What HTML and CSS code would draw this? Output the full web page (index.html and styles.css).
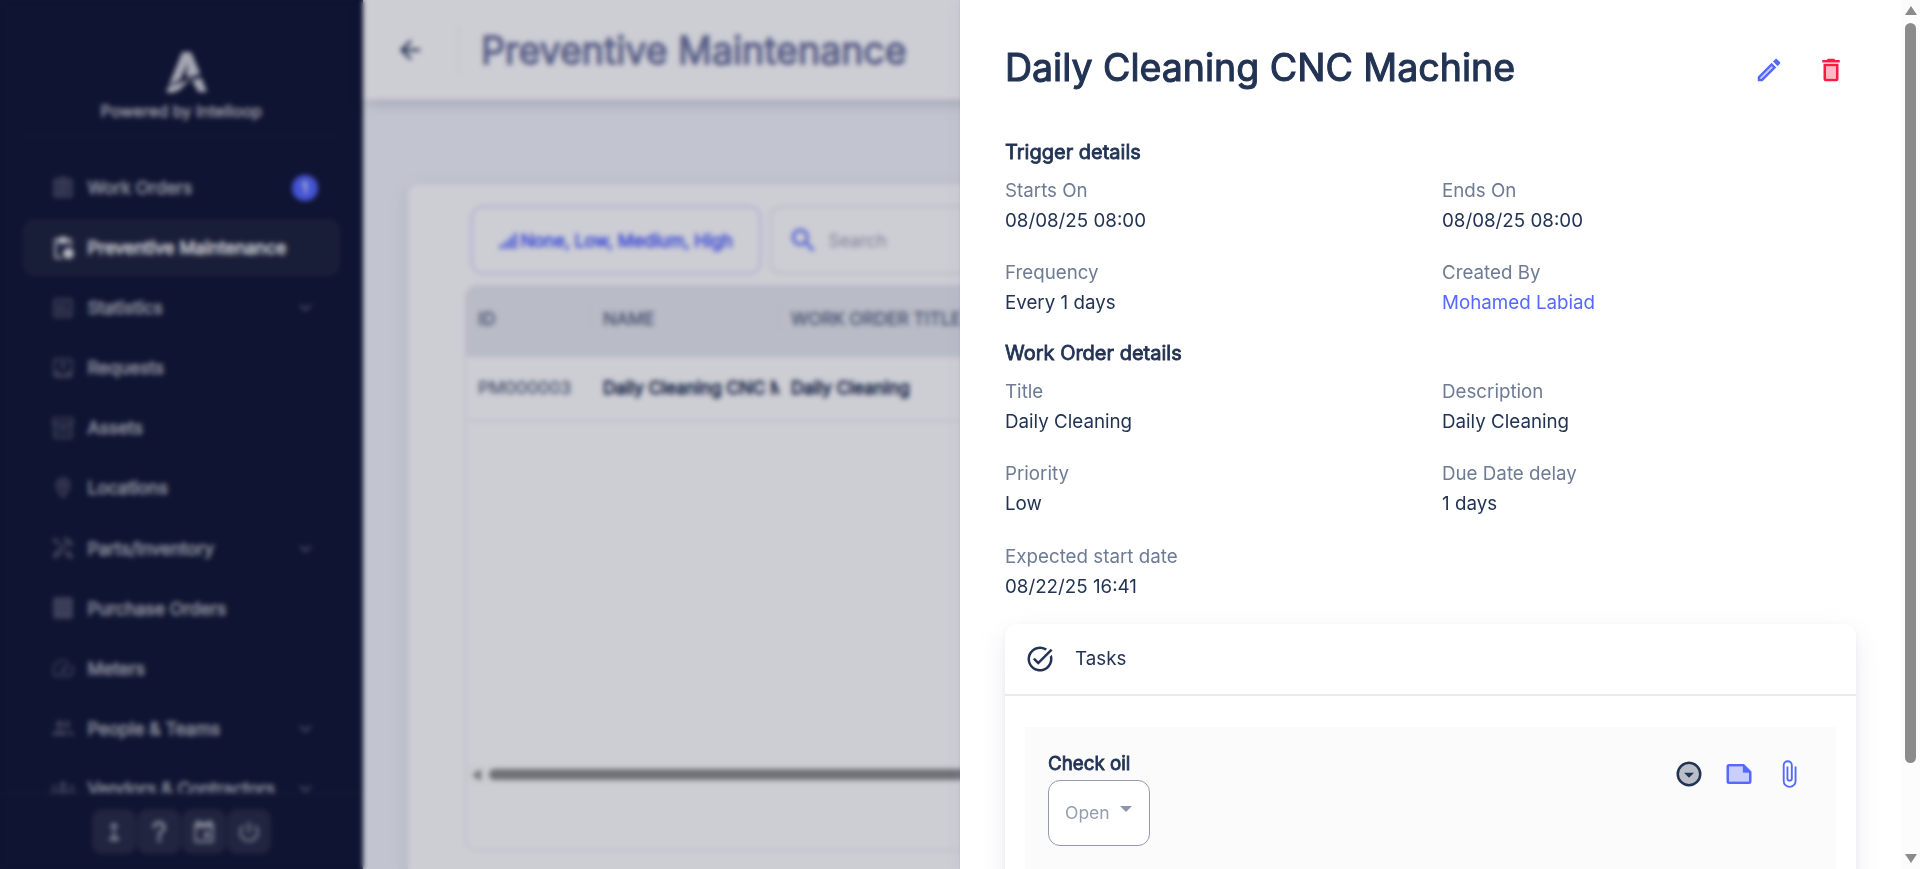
FILE: index.html
```html
<!DOCTYPE html>
<html lang="en">
<head>
<meta charset="utf-8">
<title>Preventive Maintenance</title>
<link rel="stylesheet" href="styles.css">
</head>
<body>
<div class="app">
  <aside class="sidebar">
    <div class="brand">
      <svg class="logo" viewBox="0 0 44 46"><path d="M17 2h9l4 10-4 14-5 1 2-14-8 18-12 6z"/><path d="M27 4l9 21-14 4z"/><path d="M0 44l3-6 16-5 17-7-12 6-10 10-8 3z"/><path d="M27 32l10-3 6 15h-9z"/></svg>
      <div class="powered">Powered by Intelloop</div>
    </div>
    <nav class="menu">
      <a class="item"><svg class="ico" viewBox="0 0 24 24"><path opacity=".6" d="M5 5h14v14H5z"/><path d="M19 3h-4.200a3 3 0 0 0-5.600 0H5a2 2 0 0 0-2 2v14a2 2 0 0 0 2 2h14a2 2 0 0 0 2-2V5a2 2 0 0 0-2-2zm0 16H5V5h14zM7 7h10v2H7zm0 4h10v2H7zm0 4h7v2H7z"/></svg><span>Work Orders</span><b class="badge">1</b></a>
      <a class="item active"><svg class="ico" viewBox="0 0 24 24"><path d="M17 12a5 5 0 1 0 0 10 5 5 0 0 0 0-10zM18 3h-3.200a3 3 0 0 0-5.600 0H6a2 2 0 0 0-2 2v15a2 2 0 0 0 2 2h6a7 7 0 0 1-1.400-2H6V5h2v3h8V5h2v5a7 7 0 0 1 2 .700V5a2 2 0 0 0-2-2z"/></svg><span>Preventive Maintenance</span></a>
      <a class="item"><svg class="ico" viewBox="0 0 24 24"><path opacity=".3" d="M5 5h14v14H5z"/><path d="M19 3H5a2 2 0 0 0-2 2v14a2 2 0 0 0 2 2h14a2 2 0 0 0 2-2V5a2 2 0 0 0-2-2zm0 16H5V5h14zM7 10h2v7H7zm4-3h2v10h-2zm4 6h2v4h-2z"/></svg><span>Statistics</span><svg class="chev" viewBox="0 0 24 24"><path d="M7.400 8.600 12 13.200l4.600-4.600L18 10l-6 6-6-6z"/></svg></a>
      <a class="item"><svg class="ico" viewBox="0 0 24 24"><path d="M19 3H5a2 2 0 0 0-2 2v14a2 2 0 0 0 2 2h14a2 2 0 0 0 2-2V5a2 2 0 0 0-2-2zm0 12h-4a3 3 0 0 1-6 0H5V5h14zM8 10h3v4h2v-4h3l-4-4z"/></svg><span>Requests</span></a>
      <a class="item"><svg class="ico" viewBox="0 0 24 24"><path opacity=".3" d="M5 8h14v12H5z"/><path d="M20 2H4a2 2 0 0 0-2 2v3.500c0 .700.400 1.300 1 1.500V20a2 2 0 0 0 2 2h14a2 2 0 0 0 2-2V9c.600-.200 1-.800 1-1.500V4a2 2 0 0 0-2-2zm-1 18H5V9h14zM4 7V4h16v3zm5 5h6v2H9z"/></svg><span>Assets</span></a>
      <a class="item"><svg class="ico" viewBox="0 0 24 24"><path opacity=".4" d="M12 4a5 5 0 0 0-5 5c0 3 3 7 5 10 2-3 5-7 5-10a5 5 0 0 0-5-5z"/><path d="M12 2a7 7 0 0 0-7 7c0 5.200 7 13 7 13s7-7.800 7-13a7 7 0 0 0-7-7zM7 9a5 5 0 0 1 10 0c0 2.900-2.900 7.200-5 9.900C9.900 16.200 7 11.900 7 9zm5-2.500a2.500 2.500 0 1 0 0 5 2.500 2.500 0 0 0 0-5z"/></svg><span>Locations</span></a>
      <a class="item"><svg class="ico" viewBox="0 0 24 24"><path d="m21.700 18.900-5-5.100h-1l-2.500 2.500v1l5.100 5c.300.300.700.300 1 0l2.400-2.400a.7.700 0 0 0 0-1zM17.300 10.200l1.400-1.400 2.200 2.100a3 3 0 0 0 0-4.200l-3.600-3.500-1.400 1.400V1.800L15.200 1l-3.500 3.600.7.700h2.800l-1.400 1.400 1.100 1.100-2.900 2.900-4.100-4.200V5.100L4.800 2.100 2 4.900l3 3h1.500l4.100 4.200-.9.800H7.600l-5.300 5.300a1 1 0 0 0 0 1.400l2.100 2.100c.400.400 1 .400 1.400 0l5.300-5.300v-2.100l5.200-5.200z"/></svg><span>Parts/Inventory</span><svg class="chev" viewBox="0 0 24 24"><path d="M7.400 8.600 12 13.200l4.600-4.600L18 10l-6 6-6-6z"/></svg></a>
      <a class="item"><svg class="ico" viewBox="0 0 24 24"><path opacity=".6" d="M3 3h18v18H3z"/><path d="M3 2h18v20H3zm3 5h12v1H6zm0 4h12v1H6zm0 4h12v1H6z" fill-rule="evenodd"/></svg><span>Purchase Orders</span></a>
      <a class="item"><svg class="ico" viewBox="0 0 24 24"><path d="m20.400 8.600-1.200 1.800A8 8 0 0 1 19 18H5.100A8 8 0 0 1 15.600 6.800L17.400 5.600A10 10 0 0 0 3.400 19a2 2 0 0 0 1.700 1h13.800a2 2 0 0 0 1.700-1 10 10 0 0 0-.2-10.400zM10.600 15.400a2 2 0 0 0 2.800 0l5.700-8.500-8.500 5.700a2 2 0 0 0 0 2.800z"/></svg><span>Meters</span></a>
      <a class="item"><svg class="ico" viewBox="0 0 24 24"><path d="M9 12a3.500 3.500 0 1 0 0-7 3.500 3.500 0 0 0 0 7zm0 1.800c-2.300 0-7 1.200-7 3.500V19h14v-1.700c0-2.300-4.700-3.500-7-3.500zM15 12a3.500 3.500 0 1 0-1.500-6.600 5.500 5.500 0 0 1 0 6.200c.400.200 1 .400 1.500.400zm1 1.800c1.200.8 2 2 2 3.500V19h4v-1.700c0-2-3.500-3.200-6-3.500z"/></svg><span>People &amp; Teams</span><svg class="chev" viewBox="0 0 24 24"><path d="M7.400 8.600 12 13.200l4.600-4.600L18 10l-6 6-6-6z"/></svg></a>
      <a class="item"><svg class="ico" viewBox="0 0 24 24"><circle cx="12" cy="9" r="3"/><circle cx="4" cy="11" r="2"/><circle cx="20" cy="11" r="2"/><path d="M6 18v-2c0-2 3-3 6-3s6 1 6 3v2zM0 18v-2c0-1 2-2 5-2v4zm24 0v-2c0-1-2-2-5-2v4z"/></svg><span>Vendors &amp; Contractors</span><svg class="chev" viewBox="0 0 24 24"><path d="M7.400 8.600 12 13.200l4.600-4.600L18 10l-6 6-6-6z"/></svg></a>
    </nav>
    <div class="dock">
      <span class="dock-btn"><svg viewBox="0 0 24 24"><path d="M12 3 7.500 7.500H11v9H8V20h8.500v-3.500H13v-9h3.500z"/></svg></span>
      <span class="dock-btn"><svg viewBox="0 0 24 24"><path d="M11 18h2.500v3H11zM12 2a6 6 0 0 0-6 6h2.500a3.500 3.500 0 1 1 7 0c0 3.300-4.700 3-4.700 8h2.500c0-3.600 4.700-4 4.700-8a6 6 0 0 0-6-6z" stroke="currentColor" stroke-width=".8"/></svg></span>
      <span class="dock-btn"><svg viewBox="0 0 24 24"><path d="M17 12h-5v5h5zM16 1v2H8V1H5.500v2H5a2 2 0 0 0-2 2v15a2 2 0 0 0 2 2h14a2 2 0 0 0 2-2V5a2 2 0 0 0-2-2h-.5V1zm3 18.500H5V8h14z"/></svg></span>
      <span class="dock-btn"><svg viewBox="0 0 24 24"><path d="M13 3h-2v10h2zm4.800 2.200-1.400 1.400A7 7 0 1 1 7.600 6.600L6.200 5.200a9 9 0 1 0 11.600 0z"/></svg></span>
    </div>
  </aside>
  <main class="main">
    <header class="topbar">
      <svg class="back" viewBox="0 0 24 24"><path d="M20 11H7.800l5.600-5.600L12 4l-8 8 8 8 1.400-1.400L7.800 13H20z"/></svg>
      <h1 class="page-title">Preventive Maintenance</h1>
    </header>
    <section class="panel">
      <div class="toolbar">
        <div class="filter"><svg class="bars" viewBox="0 0 24 24"><path d="M2 17h4v5H2zm6-4h3.500v9H8zm5.500-5H17v14h-3.500zM19 3h3.500v19H19z"/></svg><span>None, Low, Medium, High</span></div>
        <div class="search"><svg class="lens" viewBox="0 0 24 24"><path d="M15.500 14h-.8l-.3-.3a6.500 6.500 0 1 0-.7.7l.3.300v.8l5 5 1.500-1.500zm-6 0a4.500 4.500 0 1 1 0-9 4.500 4.500 0 0 1 0 9z"/></svg><span>Search</span></div>
      </div>
      <div class="grid">
        <div class="row head"><div class="cell c1">ID</div><div class="cell c2">NAME</div><div class="cell c3">WORK ORDER TITLE</div></div>
        <div class="row body"><div class="cell c1">PM000003</div><div class="cell c2">Daily Cleaning CNC Machine</div><div class="cell c3">Daily Cleaning</div></div>
        <div class="blank"></div>
        <div class="hscroll"><i class="tri-left"></i><i class="hthumb"></i></div>
        <div class="grid-foot"></div>
      </div>
    </section>
  </main>
</div>
<div class="backdrop"></div>
<div class="drawer">
  <div class="content">
    <div class="title-row">
      <h2 class="title">Daily Cleaning CNC Machine</h2>
      <div class="actions">
        <svg class="i30 blue" viewBox="0 0 24 24"><path opacity=".3" d="M5 18.100V19h.9l9.100-9.100-.9-.9z"/><path d="M17.700 3c-.3 0-.5.100-.7.300l-1.800 1.800L18.900 8.900l1.800-1.900c.4-.4.4-1 0-1.400l-2.300-2.300c-.2-.2-.5-.3-.7-.3zM14.100 6.200 3 17.300V21h3.800L17.800 9.900zM5.900 19H5v-.9L14.100 9l.9.900z"/></svg>
        <svg class="i30 red" viewBox="0 0 24 24"><path opacity=".3" d="M8 9h8v10H8z"/><path d="m15.500 4-1-1h-5l-1 1H5v2h14V4zM6 19a2 2 0 0 0 2 2h8a2 2 0 0 0 2-2V7H6zM8 9h8v10H8z"/></svg>
      </div>
    </div>
    <h3 class="section">Trigger details</h3>
    <div class="fields">
      <div class="field"><label>Starts On</label><p>08/08/25 08:00</p></div>
      <div class="field"><label>Ends On</label><p>08/08/25 08:00</p></div>
      <div class="field"><label>Frequency</label><p>Every 1 days</p></div>
      <div class="field"><label>Created By</label><p class="link">Mohamed Labiad</p></div>
    </div>
    <h3 class="section">Work Order details</h3>
    <div class="fields">
      <div class="field"><label>Title</label><p>Daily Cleaning</p></div>
      <div class="field"><label>Description</label><p>Daily Cleaning</p></div>
      <div class="field"><label>Priority</label><p>Low</p></div>
      <div class="field"><label>Due Date delay</label><p>1 days</p></div>
      <div class="field"><label>Expected start date</label><p>08/22/25 16:41</p></div>
    </div>
    <div class="card">
      <div class="card-head">
        <svg class="i30 navy" viewBox="0 0 24 24"><path d="M22 5.200 10.600 16.600l-4.200-4.300 1.400-1.400 2.800 2.800 10-10zM19.800 10.200c.1.600.2 1.200.2 1.800a8 8 0 1 1-3.800-6.800l1.500-1.400A10 10 0 1 0 22 12c0-1.200-.2-2.400-.6-3.400z"/></svg>
        <span>Tasks</span>
      </div>
      <div class="card-body">
        <div class="task">
          <div class="task-main">
            <h4 class="task-name">Check oil</h4>
            <div class="select"><span>Open</span><i class="caret"></i></div>
          </div>
          <div class="task-icons">
            <svg class="i30 navy" viewBox="0 0 24 24"><circle cx="12" cy="12" r="8.500" opacity=".3"/><path d="M12 4a8 8 0 1 1 0 16 8 8 0 0 1 0-16m0-2a10 10 0 1 0 0 20 10 10 0 0 0 0-20zm0 13-4-4h8z" fill-rule="evenodd"/></svg>
            <svg class="i30 blue" viewBox="0 0 24 24"><path opacity=".3" d="M4 6v12h16v-7h-5V6z"/><path d="M16 4H4a2 2 0 0 0-2 2v12a2 2 0 0 0 2 2h16a2 2 0 0 0 2-2v-8zM4 18V6h11v5h5v7z"/></svg>
            <svg class="i30 blue" viewBox="0 0 24 24"><path d="M16.500 6v11.500a4 4 0 0 1-8 0V5a2.500 2.500 0 0 1 5 0v10.500a1 1 0 0 1-2 0V6H10v9.500a2.500 2.500 0 0 0 5 0V5a4 4 0 0 0-8 0v12.500a5.500 5.500 0 0 0 11 0V6z"/></svg>
          </div>
        </div>
      </div>
    </div>
  </div>
  <div class="vscroll"><i class="tri-up"></i><i class="vthumb"></i><i class="tri-down"></i></div>
</div>
</body>
</html>
```
FILE: styles.css
```css
* { box-sizing: border-box; }
body, h1, h2, h3, h4, p { margin: 0; font-weight: 400; }
body { height: 869px; overflow: hidden; font-family: Inter, "Liberation Sans", sans-serif; font-size: 17.5px; color: #223354; }
svg { fill: currentColor; display: block; flex: none; }

.app { display: flex; height: 869px; overflow: hidden; }

/* sidebar */
.sidebar { width: 362.500px; flex: none; height: 869px; background: #111834; display: flex; flex-direction: column; color: #9fa2ae; }
.brand { height: 136px; margin: 0 23px; border-bottom: 2px solid #182038; flex: none; display: flex; flex-direction: column; align-items: center; padding-top: 49px; }
.logo { width: 42px; height: 46px; color: #d0d1d8; margin-left: 12px; }
.powered { margin-top: 5px; line-height: 22px; font-size: 16.25px; color: #c4c5cd; -webkit-text-stroke: .5px; }
.menu { flex: 1; min-height: 0; overflow: hidden; padding: 23px 22.500px 0 23px; }
.item { height: 57px; margin-bottom: 3.100px; border-radius: 12px; display: flex; align-items: center; padding: 0 22.500px 0 27px; -webkit-text-stroke: 1.100px; }
.item span { flex: 1; margin-left: 11.500px; white-space: nowrap; }
.item.active { background: #1f253d; color: #e6e7ea; }
.ico { width: 26px; height: 26px; color: #4d5268; -webkit-text-stroke: 0; }
.item.active .ico { color: #e6e7ea; }
.chev { width: 25px; height: 25px; color: #5b5f73; }
.badge { width: 26px; height: 26px; border-radius: 50%; background: #5569ff; color: #fff; font-size: 14px; font-weight: 400; line-height: 26px; text-align: center; -webkit-text-stroke: .4px; }
.dock { height: 76px; flex: none; border-top: 2px solid #182038; display: flex; justify-content: center; gap: 1px; padding: 14px 0 0; }
.dock-btn { width: 44px; height: 45px; border-radius: 10px; background: #292d46; display: flex; align-items: center; justify-content: center; color: #a5a8b3; }
.dock-btn svg { width: 26px; height: 26px; }

/* page */
.main { flex: 1; min-width: 0; background: #f2f5f9; display: flex; flex-direction: column; }
.topbar { height: 100px; flex: none; background: #fff; display: flex; align-items: center; padding-left: 32.500px; box-shadow: 0 2px 4px -3px rgba(34,51,84,.3), 0 5px 16px -4px rgba(34,51,84,.25); }
.back { width: 30px; height: 30px; }
.page-title { margin-left: 33px; padding-left: 22px; height: 50px; border-left: 1px solid #f0f1f4; line-height: 52px; font-size: 37.5px; color: #6e759f; -webkit-text-stroke: 1.400px #6e759f; white-space: nowrap; }
.panel { margin: 84px 0 0 45.500px; height: 698px; flex: none; background: #fff; border-radius: 12px; box-shadow: 0 4px 18px rgba(159,175,191,.3); padding: 22px 0 0 57px; }
.toolbar { display: flex; gap: 9px; padding-left: 5.500px; color: #5569ff; }
.filter { width: 290px; height: 68px; border: 1.500px solid #aab4ff; border-radius: 12px; display: flex; align-items: center; justify-content: center; gap: 2px; -webkit-text-stroke: .9px; white-space: nowrap; }
.bars { width: 20px; height: 21px; -webkit-text-stroke: 0; }
.search { flex: 1; height: 68px; border: 1.500px solid #d3d6dd; border-right: 0; border-radius: 12px 0 0 12px; display: flex; align-items: center; padding-left: 17px; gap: 10px; color: #9ba3b5; }
.lens { width: 31px; height: 31px; color: #5569ff; }
.grid { margin-top: 11px; height: 566px; border: 1px solid #e4e7ec; border-radius: 12px 0 0 12px; overflow: hidden; display: flex; flex-direction: column; }
.row { display: flex; align-items: center; flex: none; white-space: nowrap; padding-bottom: 2px; }
.row.head { height: 71px; background: #e6e9ee; color: #5b6886; -webkit-text-stroke: .5px; padding-bottom: 5px; }
.row.body { height: 64px; border-bottom: 1px solid #e4e7ec; -webkit-text-stroke: .9px; }
.cell { overflow: hidden; line-height: 26px; }
.c1 { width: 137px; padding-left: 12px; }
.c2 { width: 176px; margin-right: 12px; }
.c3 { flex: 1; }
.row.body .c1 { -webkit-text-stroke: .2px; color: #4e5b78; }
.row.head .c1 { border-right: 1px solid #dde0e6; width: 125px; margin-right: 12px; }
.row.head .c2 { border-right: 1px solid #dde0e6; }
.blank { flex: 1; }
.hscroll { height: 19px; flex: none; display: flex; align-items: center; padding-left: 6px; gap: 8px; background: #fcfcfc; }
.tri-left { border: 6px solid transparent; border-left: 0; border-right: 9px solid #8b8b8b; }
.hthumb { flex: 1; height: 11px; border-radius: 6px 0 0 6px; background: #8b8b8b; }
.grid-foot { height: 66px; flex: none; }

/* overlay dims and softens everything under the drawer */
.backdrop { position: absolute; inset: 0; background: rgba(4,7,42,.2); backdrop-filter: blur(2.500px); }

/* drawer */
.drawer { position: absolute; top: 0; right: 0; width: 960px; height: 869px; overflow: hidden; background: #fff; display: flex; box-shadow: 0 0 12px rgba(159,162,191,.18), 0 0 2px rgba(100,100,150,.2); }
.content { flex: 1; padding: 0 45px; }
.title-row { height: 140px; display: flex; justify-content: space-between; }
.title { padding-top: 45px; font-size: 37.5px; line-height: 46px; -webkit-text-stroke: 1.100px; white-space: nowrap; }
.actions { display: flex; gap: 32px; padding: 55px 10px 0 0; }
.i30 { width: 30px; height: 30px; }
.blue { color: #5569ff; }
.red { color: #ff1943; }
.navy { color: #223354; }
.section { height: 24px; line-height: 24px; font-size: 20px; -webkit-text-stroke: .8px; }
.fields { display: grid; grid-template-columns: 1fr 1fr; margin-right: -23px; padding-top: 12px; }
.field { height: 82.400px; font-size: 18.75px; line-height: 30px; }
.field label { display: block; color: #6e7b94; }
.field .link { color: #5569ff; }
.card { height: 400px; border-radius: 12px; background: #fff; box-shadow: 0 11px 29px rgba(159,162,191,.2), 0 2px 5px rgba(159,162,191,.12); }
.card-head { height: 72px; border-bottom: 2px solid #e8e9f0; display: flex; align-items: center; gap: 20px; padding-left: 20px; font-size: 18.75px; }
.card-body { padding: 31px 20px; }
.task { height: 260px; background: #fbfbfb; display: flex; justify-content: space-between; padding: 24px 32px 0 23px; }
.task-name { font-size: 18.75px; line-height: 26px; -webkit-text-stroke: .8px; }
.select { margin-top: 3px; width: 102px; height: 66px; border: 1px solid #939bad; border-radius: 12px; background: #fff; color: #959eb0; display: flex; align-items: center; gap: 10px; padding-left: 16px; font-size: 17.5px; }
.caret { border: 6.500px solid transparent; border-bottom: 0; border-top-color: #8d97ab; margin-top: -7px; }
.task-icons { display: flex; gap: 20px; padding-top: 8px; }
.vscroll { width: 19px; height: 869px; background: #fcfcfc; display: flex; flex-direction: column; align-items: center; padding-top: 6px; }
.tri-up { border: 6px solid transparent; border-top: 0; border-bottom: 9px solid #8b8b8b; }
.vthumb { width: 11px; height: 740px; margin: 8px 0 91px; border-radius: 6px; background: #8b8b8b; }
.tri-down { border: 6px solid transparent; border-bottom: 0; border-top: 9px solid #8b8b8b; }
```
